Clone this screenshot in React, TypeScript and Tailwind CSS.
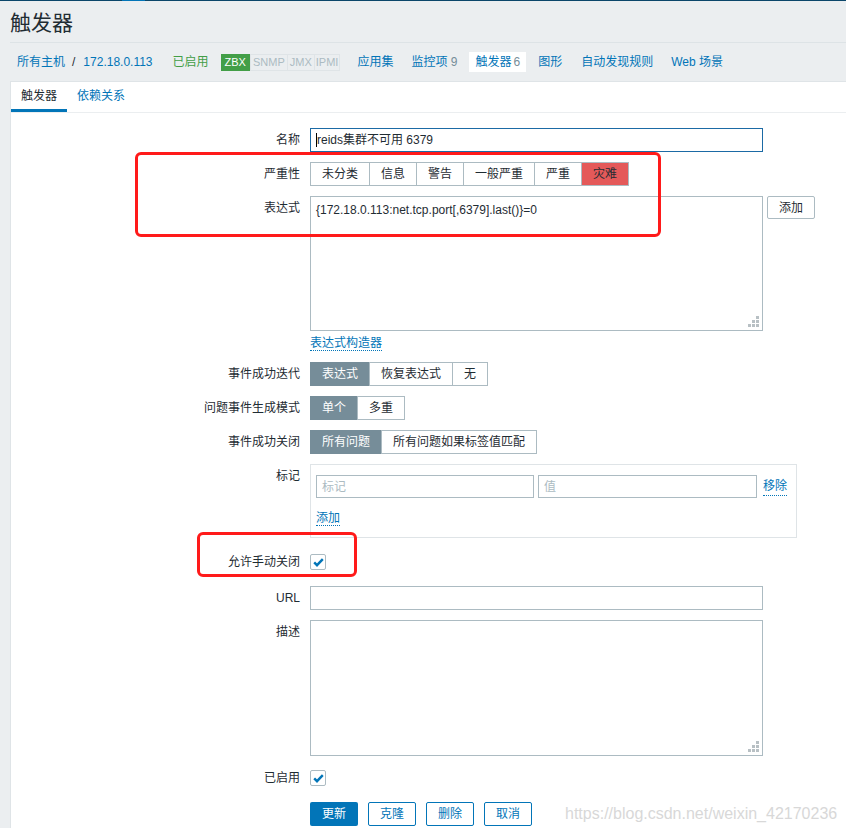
import React from 'react'

function Row({ label, children, className = '' }: { label?: string; children: React.ReactNode; className?: string }) {
  return (
    <div className={'flex ' + className}>
      <div className="w-[289px] shrink-0 text-right leading-[24px]">{label}</div>
      <div className="ml-[10px]">{children}</div>
    </div>
  )
}

function Seg({ items, active, red }: { items: string[]; active: number; red?: boolean }) {
  return (
    <div className="flex h-[24px]">
      {items.map((t, i) => {
        let cls = 'bg-white text-[#1f2c33] border-[#acbbc2]'
        if (i === active) cls = red ? 'bg-[#e45959] text-[#1f2c33] border-[#acbbc2]' : 'bg-[#768d99] text-white border-[#768d99]'
        return (
          <div key={t} className={'flex items-center border px-[11px] leading-none ' + (i > 0 ? '-ml-px ' : '') + cls}>
            {t}
          </div>
        )
      })}
    </div>
  )
}

function Grip() {
  return (
    <svg className="absolute right-[3px] bottom-[3px]" width="11" height="11" viewBox="0 0 11 11">
      <g fill="#b8c0c4">
        <rect x="8" y="0" width="3" height="3" />
        <rect x="4" y="4" width="3" height="3" />
        <rect x="8" y="4" width="3" height="3" />
        <rect x="0" y="8" width="3" height="3" />
        <rect x="4" y="8" width="3" height="3" />
        <rect x="8" y="8" width="3" height="3" />
      </g>
    </svg>
  )
}

function Check() {
  return (
    <div className="flex h-[16px] w-[16px] items-center justify-center rounded-[2px] border border-[#acbbc2] bg-white">
      <svg width="11" height="9" viewBox="0 0 11 9">
        <path d="M1.2 4.4 L4 7.2 L9.8 1.2" fill="none" stroke="#0275b8" strokeWidth="2.4" />
      </svg>
    </div>
  )
}

export default function App() {
  return (
    <div className="relative min-h-[828px] overflow-hidden bg-[#ebeef0] text-[12px] text-[#1f2c33] font-['Liberation_Sans','Noto_Sans_CJK_SC',sans-serif]">
      <div className="flex h-px bg-[#0a466a]">
        <div className="ml-[122px] w-[23px] bg-[#0275b8]" />
      </div>

      <div className="ml-[10px] flex h-[42px] items-center border-b border-[#dde3e6] pt-[2px]">
        <h1 className="text-[21px] leading-none font-normal">触发器</h1>
      </div>

      <div className="flex h-[38px] items-center pl-[17px] text-[#0275b8]">
        <span>所有主机</span>
        <span className="ml-[7px] text-[#1f2c33]">/</span>
        <span className="ml-[8px]">172.18.0.113</span>
        <span className="ml-[20px] text-[#429e47]">已启用</span>
        <div className="ml-[12px] flex h-[17px] text-[11px] leading-none">
          <span className="flex items-center bg-[#429e47] px-[4px] text-white">ZBX</span>
          <span className="flex items-center border border-[#dfe4e7] px-[2px] text-[#acbbc2]">SNMP</span>
          <span className="-ml-px flex items-center border border-[#dfe4e7] px-[2px] text-[#acbbc2]">JMX</span>
          <span className="-ml-px flex items-center border border-[#dfe4e7] px-[1px] text-[#acbbc2]">IPMI</span>
        </div>
        <span className="ml-[17px]">应用集</span>
        <span className="ml-[18px]">监控项 <span className="text-[#768d99]">9</span></span>
        <span className="ml-[12px] flex h-[20px] items-center bg-white px-[6px]">触发器 <span className="ml-[2px] text-[#768d99]">6</span></span>
        <span className="ml-[12px]">图形</span>
        <span className="ml-[19px]">自动发现规则</span>
        <span className="ml-[18px]">Web 场景</span>
      </div>

      <div className="ml-[10px] min-h-[747px] border-t border-l border-[#dfe4e7] bg-white">
        <div className="flex h-[31px] border-b border-[#ebeef0]">
          <div className="flex w-[56px] flex-col">
            <div className="flex flex-1 items-center justify-center">触发器</div>
            <div className="h-[3px] bg-[#0275b8]" />
          </div>
          <div className="flex items-center px-[10px] pb-[3px] text-[#0275b8]">依赖关系</div>
        </div>

        <div className="flex flex-col gap-[10px] pt-[15px]">
          <Row label="名称">
            <div className="flex h-[24px] w-[453px] items-center border border-[#1b6aa5] px-[5px]">
              <span className="h-[14px] w-px bg-black" />
              <span>reids集群不可用 6379</span>
            </div>
          </Row>

          <Row label="严重性">
            <Seg items={['未分类', '信息', '警告', '一般严重', '严重', '灾难']} active={5} red />
          </Row>

          <Row label="表达式">
            <div className="flex items-start">
              <div>
                <div className="relative h-[135px] w-[453px] border border-[#acbbc2] px-[5px] pt-[5px] leading-[16px]">
                  {'{172.18.0.113:net.tcp.port[,6379].last()}=0'}
                  <Grip />
                </div>
                <div className="pt-[4px] leading-[17px]">
                  <span className="border-b border-dotted border-[#0275b8] text-[#0275b8]">表达式构造器</span>
                </div>
              </div>
              <div className="ml-[4px] flex h-[23px] items-center rounded-[2px] border border-[#acbbc2] px-[11px]">添加</div>
            </div>
          </Row>

          <Row label="事件成功迭代">
            <Seg items={['表达式', '恢复表达式', '无']} active={0} />
          </Row>
          <Row label="问题事件生成模式">
            <Seg items={['单个', '多重']} active={0} />
          </Row>
          <Row label="事件成功关闭">
            <Seg items={['所有问题', '所有问题如果标签值匹配']} active={0} />
          </Row>

          <Row label="标记">
            <div className="h-[74px] w-[487px] border border-[#dfe4e7] px-[5px] pt-[10px]">
              <div className="flex items-center">
                <div className="flex h-[23px] w-[218px] items-center border border-[#acbbc2] px-[5px] text-[#acbbc2]">标记</div>
                <div className="ml-[4px] flex h-[23px] w-[219px] items-center border border-[#acbbc2] px-[5px] text-[#acbbc2]">值</div>
                <span className="ml-[6px] border-b border-dotted border-[#0275b8] text-[#0275b8]">移除</span>
              </div>
              <div className="mt-[11px]">
                <span className="border-b border-dotted border-[#0275b8] text-[#0275b8]">添加</span>
              </div>
            </div>
          </Row>

          <div className="flex h-[28px] items-center">
            <div className="w-[289px] shrink-0 text-right">允许手动关闭</div>
            <div className="ml-[10px]"><Check /></div>
          </div>

          <Row label="URL">
            <div className="h-[24px] w-[453px] border border-[#acbbc2]" />
          </Row>

          <Row label="描述">
            <div className="relative h-[136px] w-[453px] border border-[#acbbc2]">
              <Grip />
            </div>
          </Row>

          <div className="flex h-[24px] items-center">
            <div className="w-[289px] shrink-0 text-right">已启用</div>
            <div className="ml-[10px]"><Check /></div>
          </div>

          <div className="mt-[2px] flex items-center pl-[299px]">
            <div className="flex h-[24px] w-[48px] items-center justify-center rounded-[2px] bg-[#0275b8] text-white">更新</div>
            <div className="ml-[10px] flex h-[24px] w-[48px] items-center justify-center rounded-[2px] border border-[#0275b8] text-[#0275b8]">克隆</div>
            <div className="ml-[10px] flex h-[24px] w-[48px] items-center justify-center rounded-[2px] border border-[#0275b8] text-[#0275b8]">删除</div>
            <div className="ml-[10px] flex h-[24px] w-[48px] items-center justify-center rounded-[2px] border border-[#0275b8] text-[#0275b8]">取消</div>
            <span className="ml-[33px] text-[16px] text-[#d8d8d8]">https://blog.csdn.net/weixin_42170236</span>
          </div>
        </div>
      </div>

      <div className="absolute top-[152px] left-[135px] h-[85px] w-[526px] rounded-[6px] border-[3px] border-[#ff1a1a]" />
      <div className="absolute top-[532px] left-[197px] h-[45px] w-[160px] rounded-[6px] border-[3px] border-[#ff1a1a]" />
    </div>
  )
}
